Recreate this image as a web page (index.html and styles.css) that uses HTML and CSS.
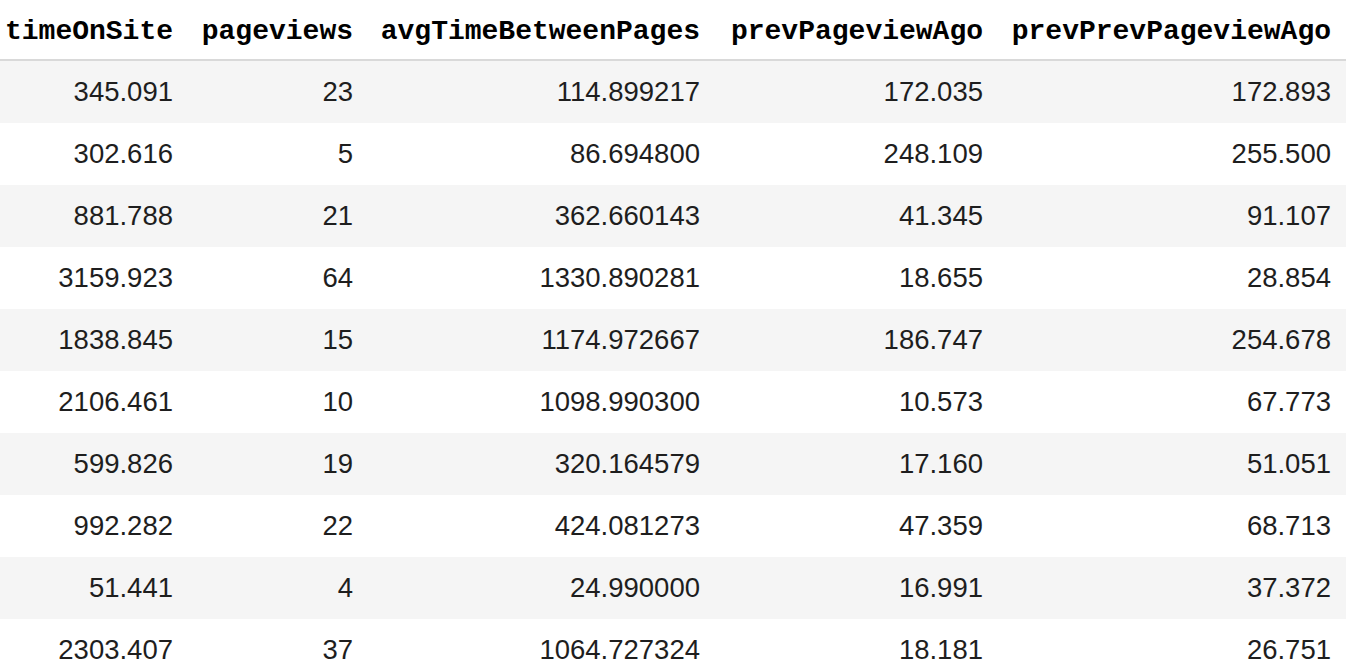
FILE: index.html
```html
<!DOCTYPE html>
<html>
<head>
<meta charset="utf-8">
<link rel="stylesheet" href="styles.css">
</head>
<body>
<table class="df">
  <colgroup>
    <col class="c1"><col class="c2"><col class="c3"><col class="c4"><col class="c5">
  </colgroup>
  <thead>
    <tr><th>timeOnSite</th><th>pageviews</th><th>avgTimeBetweenPages</th><th>prevPageviewAgo</th><th>prevPrevPageviewAgo</th></tr>
  </thead>
  <tbody>
    <tr><td>345.091</td><td>23</td><td>114.899217</td><td>172.035</td><td>172.893</td></tr>
    <tr><td>302.616</td><td>5</td><td>86.694800</td><td>248.109</td><td>255.500</td></tr>
    <tr><td>881.788</td><td>21</td><td>362.660143</td><td>41.345</td><td>91.107</td></tr>
    <tr><td>3159.923</td><td>64</td><td>1330.890281</td><td>18.655</td><td>28.854</td></tr>
    <tr><td>1838.845</td><td>15</td><td>1174.972667</td><td>186.747</td><td>254.678</td></tr>
    <tr><td>2106.461</td><td>10</td><td>1098.990300</td><td>10.573</td><td>67.773</td></tr>
    <tr><td>599.826</td><td>19</td><td>320.164579</td><td>17.160</td><td>51.051</td></tr>
    <tr><td>992.282</td><td>22</td><td>424.081273</td><td>47.359</td><td>68.713</td></tr>
    <tr><td>51.441</td><td>4</td><td>24.990000</td><td>16.991</td><td>37.372</td></tr>
    <tr><td>2303.407</td><td>37</td><td>1064.727324</td><td>18.181</td><td>26.751</td></tr>
  </tbody>
</table>
</body>
</html>
```
FILE: styles.css
```css
html, body {
  margin: 0;
  padding: 0;
  background: #ffffff;
  overflow: hidden;
}
.df {
  border-collapse: collapse;
  table-layout: fixed;
  width: 1346px;
}
.c1 { width: 188px; }
.c2 { width: 180px; }
.c3 { width: 347px; }
.c4 { width: 283px; }
.c5 { width: 348px; }
.df th, .df td {
  text-align: right;
  padding: 0 15px 0 0;
  white-space: nowrap;
}
.df th {
  font-family: "Liberation Mono", "Courier New", monospace;
  font-weight: bold;
  font-size: 28px;
  color: #000000;
  height: 60px;
  box-sizing: border-box;
  padding-top: 3px;
  vertical-align: middle;
  border-bottom: 2px solid #d9d9d9;
}
.df td {
  font-family: "Liberation Sans", Arial, Helvetica, sans-serif;
  font-size: 27.5px;
  color: #1e1e1e;
  height: 62px;
  vertical-align: middle;
}
.df tbody tr:nth-child(odd) {
  background: #f5f5f5;
}
```
